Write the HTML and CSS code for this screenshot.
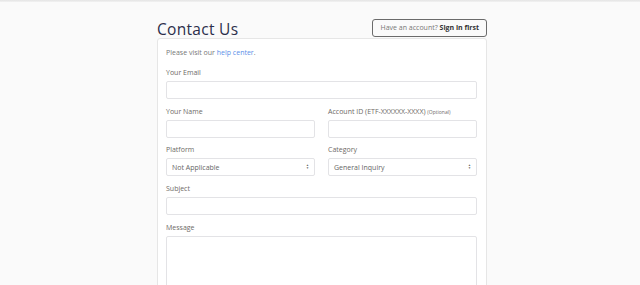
FILE: index.html
```html
<!doctype html>
<html lang="en">
  <head>
    <meta charset="UTF-8" />
    <meta name="viewport" content="width=device-width, initial-scale=1.0" />
    <title>Contact Us</title>
    <link rel="stylesheet" href="styles.css">
  </head>
  <body>
    <div class="topbar"></div>
    <div class="wrapper">
      <div class="page-head">
        <h1>Contact Us</h1>
        <a class="signin" href="#">Have an account? <b>Sign in first</b></a>
      </div>

      <form class="card">
        <p class="intro">Please visit our <a href="#">help center</a>.</p>

        <div class="field">
          <label>Your Email</label>
          <input type="text" class="control" />
        </div>

        <div class="row tight">
          <div class="field">
            <label>Your Name</label>
            <input type="text" class="control" />
          </div>
          <div class="field">
            <label>Account ID (ETF-XXXXXX-XXXX) <small>(Optional)</small></label>
            <input type="text" class="control" />
          </div>
        </div>

        <div class="row">
          <div class="field">
            <label>Platform</label>
            <div class="select">
              <span>Not Applicable</span>
              <span class="caret">&#9650;<br>&#9660;</span>
            </div>
          </div>
          <div class="field">
            <label>Category</label>
            <div class="select">
              <span>General Inquiry</span>
              <span class="caret">&#9650;<br>&#9660;</span>
            </div>
          </div>
        </div>

        <div class="field">
          <label>Subject</label>
          <input type="text" class="control" />
        </div>

        <div class="field">
          <label>Message</label>
          <textarea class="control message"></textarea>
        </div>
      </form>
    </div>
  </body>
</html>
```

FILE: styles.css
```css
html, body {
  height: 285px;
  overflow: hidden;
}
body {
  font-family: "Open Sans", Lato, sans-serif;
  margin: 0;
  background: #fafafa;
  color: #666;
}
.topbar {
  height: 2px;
  background: linear-gradient(#e4e4e4, #f2f2f2);
}
.wrapper {
  width: 330px;
  margin-left: calc(50% - 163px);
  padding-top: 17px;
}
.page-head {
  display: flex;
  justify-content: space-between;
  align-items: flex-end;
  margin-bottom: 1px;
}
h1 {
  margin: 0;
  font-size: 15.5px;
  font-weight: 400;
  color: #2b2e4a;
  line-height: 18px;
  letter-spacing: 0.3px;
  position: relative;
  top: 1px;
}
.signin {
  display: block;
  height: 18px;
  box-sizing: border-box;
  border: 1px solid #6b6b6b;
  border-radius: 3px;
  padding: 0 7px 0 8px;
  font-size: 7px;
  line-height: 16px;
  color: #777;
  text-decoration: none;
}
.signin b {
  color: #333;
  font-weight: 700;
}
.card {
  background: white;
  border: 1px solid #e6e6e6;
  border-radius: 3px;
  padding: 9px 9px 0 8px;
  height: 250px;
}
.intro {
  margin: 0 0 10px;
  font-size: 7px;
  line-height: 10px;
  color: #777;
}
.intro a {
  color: #5b8fe8;
  text-decoration: none;
}
.row {
  display: grid;
  grid-template-columns: 1fr 1fr;
  gap: 13px;
}
.field {
  margin-bottom: 8px;
}
.tight .field {
  margin-bottom: 7px;
}
label {
  display: block;
  font-size: 7px;
  line-height: 10px;
  margin-bottom: 3px;
  color: #6e6a66;
}
label small {
  font-size: 5px;
}
.control {
  display: block;
  width: 100%;
  height: 18px;
  box-sizing: border-box;
  border: 1px solid #e3e3e6;
  border-radius: 2px;
  background: white;
  margin: 0;
  font-family: inherit;
}
.message {
  height: 60px;
  resize: none;
}
.select {
  height: 18px;
  box-sizing: border-box;
  border: 1px solid #e3e3e6;
  border-radius: 2px;
  display: flex;
  align-items: center;
  justify-content: space-between;
  padding: 0 5px 0 5px;
  font-size: 7px;
  color: #666;
}
.caret {
  font-size: 3px;
  line-height: 3px;
  color: #666;
  text-align: center;
}
```
